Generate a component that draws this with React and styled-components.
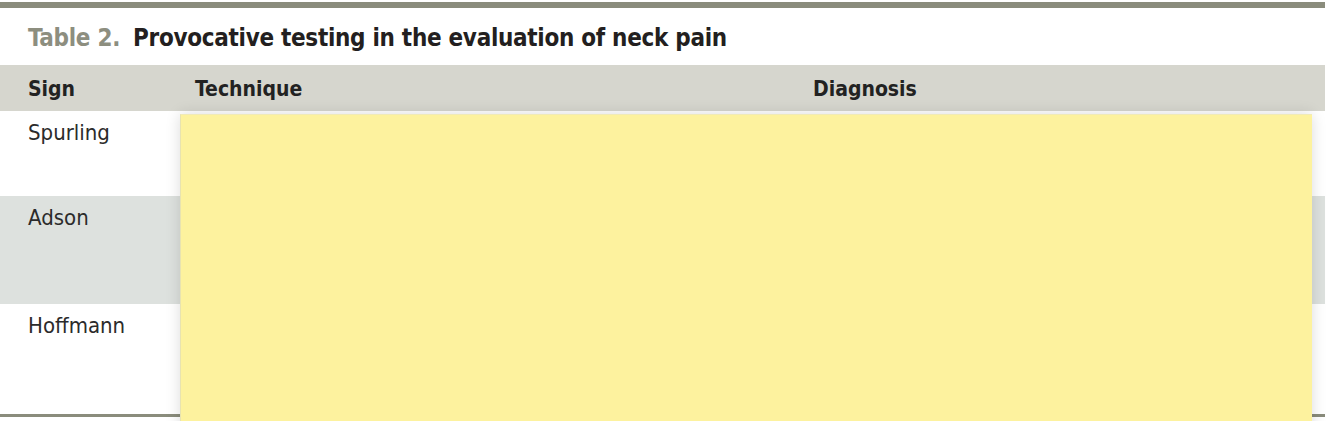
import React from "react";
import styled, { createGlobalStyle } from "styled-components";

const Global = createGlobalStyle`
  html, body { margin: 0; padding: 0; background: #ffffff; }
  body { font-family: "DejaVu Sans Condensed", "DejaVu Sans", sans-serif; }
`;

const Page = styled.div`
  position: relative;
  width: 1334px;
  height: 421px;
  overflow: hidden;
  background: #fff;
  padding-top: 2px;
  box-sizing: border-box;
`;

const Figure = styled.div`
  width: 1325px;
  border-top: 6px solid #8a8c7c;
  border-bottom: 3px solid #8a8c7c;
`;

const Caption = styled.div`
  height: 57px;
  display: flex;
  align-items: center;
  padding-left: 28px;
  padding-top: 2px;
  box-sizing: border-box;
  font-family: "DejaVu Sans Condensed", "DejaVu Sans", sans-serif;
  font-weight: 700;
  font-size: 24px;
  color: #231f20;
  letter-spacing: -0.3px;
`;

const Label = styled.span`
  color: #8d8e7f;
  margin-right: 13px;
`;

const Row = styled.div`
  display: grid;
  grid-template-columns: 167px 618px 1fr;
  height: ${(p) => p.$h}px;
  background: ${(p) => p.$bg || "#ffffff"};
  padding-left: 28px;
  box-sizing: border-box;
`;

const HeadCell = styled.div`
  font-family: "DejaVu Sans Condensed", "DejaVu Sans", sans-serif;
  font-weight: 700;
  font-size: 21px;
  color: #222;
  padding-top: 12px;
`;

const Cell = styled.div`
  font-family: "DejaVu Sans Condensed", "DejaVu Sans", sans-serif;
  font-size: 22px;
  color: #2b2b2b;
  padding-top: 9px;
`;

const Note = styled.div`
  position: absolute;
  left: 180px;
  top: 114px;
  width: 1131px;
  height: 330px;
  background: #fdf29e;
  border-top: 1px solid #f0eab8;
  border-left: 1px solid #e8e3b0;
  box-shadow: 0 0 14px rgba(0, 0, 0, 0.14);
`;

export default function App() {
  return (
    <>
      <Global />
      <Page>
        <Figure>
          <Caption>
            <Label>Table 2.</Label>Provocative testing in the evaluation of neck pain
          </Caption>
          <Row $h={46} $bg="#d6d6ce">
            <HeadCell>Sign</HeadCell>
            <HeadCell>Technique</HeadCell>
            <HeadCell>Diagnosis</HeadCell>
          </Row>
          <Row $h={85}>
            <Cell>Spurling</Cell>
          </Row>
          <Row $h={108} $bg="#dde1de">
            <Cell>Adson</Cell>
          </Row>
          <Row $h={110}>
            <Cell>Hoffmann</Cell>
          </Row>
        </Figure>
        <Note />
      </Page>
    </>
  );
}
